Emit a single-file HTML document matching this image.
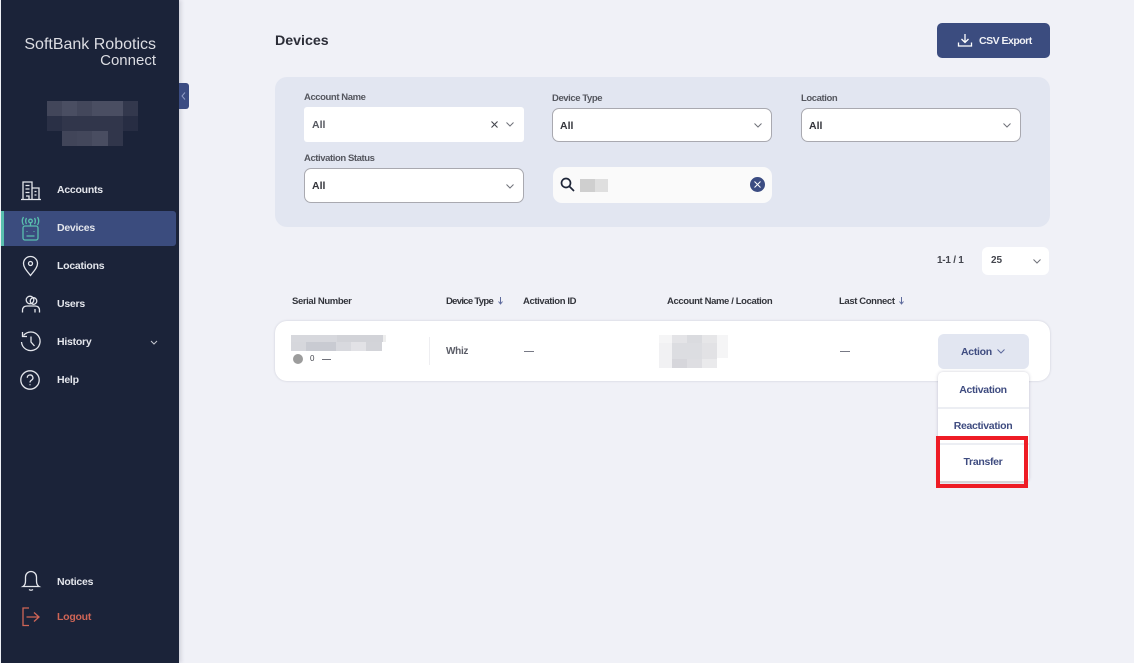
<!DOCTYPE html>
<html><head><meta charset="utf-8"><title>Devices</title>
<style>
*{box-sizing:border-box}
html{background:#f0f1f7}
html,body{margin:0;padding:0}
body{width:1134px;height:663px;overflow:hidden;background:#f0f1f7;position:relative;font-family:"Liberation Sans",sans-serif;filter:blur(.3px)}
.a{position:absolute}
.t{position:absolute;white-space:nowrap;font-weight:700;font-size:10px;line-height:12px}
.nav{color:#e4e6ec;font-size:10.5px;letter-spacing:-.25px}
.lab{color:#55575f;font-size:9.5px;letter-spacing:-.42px}
.sel{position:absolute;background:#fff;border:1px solid #a9a9b0;border-radius:7px;height:34px;width:220px}
.val{position:absolute;left:7px;top:10px;font-weight:700;font-size:10.5px;line-height:12px;color:#33343a}
svg{position:absolute;overflow:visible}
.px{position:absolute}
.h{color:#33353c;font-size:9.5px;letter-spacing:-.38px}
.menu{color:#3f4c80;font-size:10.5px;letter-spacing:-.32px;text-align:center;width:92px;left:937px}
</style></head><body>
<div class="a" style="left:0;top:0;width:179px;height:663px;background:#1b2339;box-shadow:2px 0 4px rgba(60,60,90,.18)"></div>
<div class="a" style="left:0;top:0;width:1px;height:663px;background:#eef0f6"></div>
<div class="t" style="left:10px;width:146px;text-align:right;top:36px;font-weight:400;font-size:16px;line-height:18px;color:#dcdde3">SoftBank Robotics</div>
<div class="t" style="left:60px;width:96px;text-align:right;top:52px;font-weight:400;font-size:15px;line-height:18px;color:#dcdde3">Connect</div>
<div class="a" style="left:179px;top:83px;width:10px;height:26px;background:#3b4c82;border-radius:0 3px 3px 0"></div>
<svg style="left:181px;top:92px" width="6" height="8"><path d="M4 .5 1 4l3 3.5" fill="none" stroke="#8f9bc4" stroke-width="1"/></svg>

<!-- blurred sidebar block -->
<div class="px" style="left:47px;top:101px;width:15px;height:15px;background:#42465a"></div>
<div class="px" style="left:62px;top:101px;width:15px;height:15px;background:#4a4e62"></div>
<div class="px" style="left:77px;top:101px;width:15px;height:15px;background:#43475b"></div>
<div class="px" style="left:92px;top:101px;width:31px;height:15px;background:#4a4e62"></div>
<div class="px" style="left:123px;top:101px;width:15px;height:15px;background:#33384d"></div>
<div class="px" style="left:47px;top:116px;width:15px;height:15px;background:#2a3046"></div>
<div class="px" style="left:62px;top:116px;width:61px;height:15px;background:#31364b"></div>
<div class="px" style="left:123px;top:116px;width:15px;height:15px;background:#272d43"></div>
<div class="px" style="left:62px;top:131px;width:15px;height:15px;background:#414559"></div>
<div class="px" style="left:77px;top:131px;width:15px;height:15px;background:#43475b"></div>
<div class="px" style="left:92px;top:131px;width:16px;height:15px;background:#494d61"></div>
<div class="px" style="left:108px;top:131px;width:15px;height:15px;background:#31364b"></div>

<!-- active nav -->
<div class="a" style="left:1px;top:211px;width:175px;height:35px;background:#3b4c7e;border-radius:0 3px 3px 0"></div>
<div class="a" style="left:1px;top:211px;width:3px;height:35px;background:#59bfae"></div>

<!-- Accounts icon -->
<svg style="left:20px;top:180px" width="22" height="22" fill="none" stroke="#e4e6ec" stroke-width="1.300">
<path d="M1 19.500H21M3 19.500V2H12V19.500M12 8H19V19.500M5.500 5.500H9.500M5.500 9H9.500M5.500 12.500H9.500M14.500 11.500H16.500M14.500 15H16.500M6 16H9V19.500"/></svg>
<div class="t nav" style="left:57px;top:184px">Accounts</div>
<!-- Devices icon -->
<svg style="left:20px;top:216px" width="22" height="26" fill="none" stroke="#59bfae" stroke-width="1.300">
<circle cx="10.500" cy="5" r="1.800"/><path d="M10.500 7V9.500M6.500 2Q4.800 5 6.500 8M14.500 2Q16.200 5 14.500 8M3.500 1Q1 5 3.500 9M17.500 1Q20 5 17.500 9"/>
<rect x="3" y="10" width="15" height="14" rx="2"/><path d="M6.500 20H14.500M7 15V15.800M14 15V15.800"/></svg>
<div class="t nav" style="left:57px;top:222px">Devices</div>
<!-- Locations icon -->
<svg style="left:22px;top:255px" width="18" height="22" fill="none" stroke="#e4e6ec" stroke-width="1.300">
<path d="M8.500 20.500C5 16 1.500 12.500 1.500 8.500A7 7 0 0 1 15.500 8.500C15.500 12.500 12 16 8.500 20.500Z"/><circle cx="8.500" cy="8.500" r="2"/></svg>
<div class="t nav" style="left:57px;top:260px">Locations</div>
<!-- Users icon -->
<svg style="left:21px;top:295px" width="20" height="20" fill="none" stroke="#e4e6ec" stroke-width="1.300">
<circle cx="9" cy="5" r="3.800"/><circle cx="12.500" cy="6" r="3.300"/><path d="M1.500 17.500V15.500Q1.500 11 6 11H14Q18.500 11 18.500 15.500V17.500M14 14V17.500"/></svg>
<div class="t nav" style="left:57px;top:298px">Users</div>
<!-- History icon -->
<svg style="left:20px;top:331px" width="22" height="22" fill="none" stroke="#e4e6ec" stroke-width="1.300">
<path d="M3.500 4.500A9.300 9.300 0 1 1 1.500 11"/><path d="M2.500 1V5.500H7M11 5.500V11L14.500 15"/></svg>
<div class="t nav" style="left:57px;top:336px">History</div>
<svg style="left:150px;top:340px" width="8" height="5"><path d="M1 1 4 4 7 1" fill="none" stroke="#c6c8d0" stroke-width="1"/></svg>
<!-- Help icon -->
<svg style="left:20px;top:370px" width="20" height="20" fill="none" stroke="#e4e6ec" stroke-width="1.300">
<circle cx="10" cy="10" r="9.200"/><path d="M7.300 7.800A2.800 2.800 0 1 1 11.500 10.200C10.500 10.800 10 11.300 10 12.500M10 14.300V15.300"/></svg>
<div class="t nav" style="left:57px;top:374px">Help</div>
<!-- Notices icon -->
<svg style="left:22px;top:570px" width="18" height="22" fill="none" stroke="#e4e6ec" stroke-width="1.300">
<path d="M1 16.500Q3.500 15 3.500 11V7A5.500 5.500 0 0 1 14.500 7V11Q14.500 15 17 16.500ZM7 19.500Q9 21 11 19.500"/></svg>
<div class="t nav" style="left:57px;top:575.500px">Notices</div>
<!-- Logout icon -->
<svg style="left:22px;top:607px" width="18" height="20" fill="none" stroke="#cf6556" stroke-width="1.300">
<path d="M7 1H1V18.500H7M4.500 10H17M12 5.500 17 10 12 14.500"/></svg>
<div class="t nav" style="left:57px;top:611px;color:#cf6556">Logout</div>

<!-- Header -->
<div class="t" style="left:275px;top:33px;font-size:14.200px;line-height:16px;color:#2c2e38">Devices</div>
<div class="a" style="left:937px;top:23px;width:113px;height:35px;background:#3b4c7f;border-radius:5px"></div>
<svg style="left:957px;top:33px" width="16" height="15" fill="none" stroke="#fff" stroke-width="1.300"><path d="M8 1V9.500M4.500 6 8 9.500 11.500 6M1.500 9.500V13H14.500V9.500"/></svg>
<div class="t" style="left:979px;top:34.500px;font-size:10.500px;letter-spacing:-.5px;color:#f0f1f6">CSV Export</div>

<!-- Filter panel -->
<div class="a" style="left:275px;top:77px;width:775px;height:150px;background:#e2e6f1;border-radius:12px"></div>
<div class="t lab" style="left:304px;top:91.500px">Account Name</div>
<div class="a" style="left:304px;top:107px;width:220px;height:35px;background:#fff;border-radius:3px"></div>
<div class="t" style="left:312px;top:118.500px;font-size:10.500px;color:#55575f">All</div>
<svg style="left:491px;top:121px" width="7" height="7"><path d="M.5.5 6.500 6.500M6.500.5.500 6.500" stroke="#44464e" stroke-width="1.100"/></svg>
<svg style="left:506px;top:122px" width="8" height="5"><path d="M.5.5 4 4 7.500.5" fill="none" stroke="#70727a" stroke-width="1"/></svg>

<div class="t lab" style="left:552px;top:92.500px">Device Type</div>
<div class="sel" style="left:552px;top:108px"><div class="val" style="top:10.500px">All</div><svg style="left:201px;top:14px" width="8" height="5"><path d="M.5.5 4 4 7.500.5" fill="none" stroke="#70727a" stroke-width="1"/></svg></div>
<div class="t lab" style="left:801px;top:92.500px">Location</div>
<div class="sel" style="left:801px;top:108px"><div class="val" style="top:10.500px">All</div><svg style="left:201px;top:14px" width="8" height="5"><path d="M.5.5 4 4 7.500.5" fill="none" stroke="#70727a" stroke-width="1"/></svg></div>
<div class="t lab" style="left:304px;top:152.500px">Activation Status</div>
<div class="sel" style="left:304px;top:168px;height:35px"><div class="val" style="top:10.500px">All</div><svg style="left:201px;top:15px" width="8" height="5"><path d="M.5.5 4 4 7.500.5" fill="none" stroke="#70727a" stroke-width="1"/></svg></div>

<div class="a" style="left:553px;top:167px;width:219px;height:36px;background:#fafafa;border-radius:9px"></div>
<svg style="left:560px;top:177px" width="15" height="15" fill="none" stroke="#1e2538" stroke-width="1.700"><circle cx="6" cy="6" r="4.500"/><path d="M9.500 9.500 14 14"/></svg>
<div class="px" style="left:580px;top:179px;width:15px;height:13px;background:#cfcfcf"></div>
<div class="px" style="left:595px;top:179px;width:13px;height:13px;background:#dfdfdf"></div>
<div class="a" style="left:750px;top:177px;width:15px;height:15px;border-radius:50%;background:#3b4c82"></div>
<svg style="left:754px;top:181px" width="7" height="7"><path d="M.5.5 6.500 6.500M6.500.5.500 6.500" stroke="#fff" stroke-width="1"/></svg>

<!-- Pagination -->
<div class="t" style="left:937px;top:254.500px;font-size:10px;letter-spacing:-.25px;color:#44464e">1-1 / 1</div>
<div class="a" style="left:982px;top:247px;width:67px;height:28px;background:#fff;border-radius:6px"></div>
<div class="t" style="left:991px;top:254.500px;font-size:10px;color:#44464e">25</div>
<svg style="left:1033px;top:259px" width="8" height="5"><path d="M.5.5 4 4 7.500.5" fill="none" stroke="#70727a" stroke-width="1"/></svg>

<!-- Table header -->
<div class="t h" style="left:292px;top:295.500px">Serial Number</div>
<div class="t h" style="left:446px;top:295.500px;letter-spacing:-.7px">Device Type</div>
<svg style="left:498px;top:297px" width="5" height="8" fill="none" stroke="#5d6a9c" stroke-width="1"><path d="M2.500 0V7M.5 4.500 2.500 7 4.500 4.500"/></svg>
<div class="t h" style="left:523px;top:295.500px">Activation ID</div>
<div class="t h" style="left:667px;top:295.500px">Account Name / Location</div>
<div class="t h" style="left:839px;top:295.500px">Last Connect</div>
<svg style="left:899px;top:297px" width="5" height="8" fill="none" stroke="#5d6a9c" stroke-width="1"><path d="M2.500 0V7M.5 4.500 2.500 7 4.500 4.500"/></svg>

<!-- Row -->
<div class="a" style="left:275px;top:321px;width:775px;height:60px;background:#fff;border-radius:12px;box-shadow:0 0 2px rgba(90,90,120,.25)"></div>
<div class="px" style="left:291px;top:335px;width:46px;height:7px;background:#d7d8dd"></div>
<div class="px" style="left:337px;top:335px;width:46px;height:7px;background:#d2d3d8"></div>
<div class="px" style="left:383px;top:335px;width:3px;height:7px;background:#eeeeee"></div>
<div class="px" style="left:291px;top:342px;width:15px;height:9px;background:#d6d7dc"></div>
<div class="px" style="left:306px;top:342px;width:30px;height:9px;background:#c9cbd2"></div>
<div class="px" style="left:336px;top:342px;width:15px;height:9px;background:#d8d9de"></div>
<div class="px" style="left:351px;top:342px;width:15px;height:9px;background:#e2e2e6"></div>
<div class="px" style="left:366px;top:342px;width:16px;height:9px;background:#d3d4d9"></div>
<div class="a" style="left:293px;top:354px;width:10px;height:10px;border-radius:50%;background:#9c9c9c"></div>
<div class="t" style="left:310px;top:353px;font-size:8px;font-weight:400;color:#44464e">0</div>
<div class="a" style="left:322px;top:359px;width:9px;height:1px;background:#6f717a"></div>
<div class="a" style="left:429px;top:337px;width:1px;height:28px;background:#eeeef1"></div>
<div class="t" style="left:446px;top:346px;font-size:10px;letter-spacing:-.3px;color:#5c5e68">Whiz</div>
<div class="a" style="left:524px;top:351px;width:10px;height:1px;background:#777985"></div>
<div class="px" style="left:659px;top:335px;width:13px;height:16px;background:#f5f5f6"></div>
<div class="px" style="left:672px;top:335px;width:15px;height:16px;background:#e4e4e7"></div>
<div class="px" style="left:687px;top:335px;width:15px;height:16px;background:#dadbdf"></div>
<div class="px" style="left:702px;top:335px;width:15px;height:16px;background:#e6e6e8"></div>
<div class="px" style="left:717px;top:335px;width:11px;height:23px;background:#f5f5f6"></div>
<div class="px" style="left:659px;top:343px;width:13px;height:25px;background:#f1f1f3"></div>
<div class="px" style="left:672px;top:343px;width:30px;height:16px;background:#dcdde1"></div>
<div class="px" style="left:702px;top:343px;width:15px;height:16px;background:#e2e2e5"></div>
<div class="px" style="left:672px;top:359px;width:15px;height:9px;background:#d6d6db"></div>
<div class="px" style="left:687px;top:359px;width:15px;height:9px;background:#dedee2"></div>
<div class="px" style="left:702px;top:359px;width:15px;height:9px;background:#eaeaec"></div>
<div class="a" style="left:840px;top:351px;width:10px;height:1px;background:#777985"></div>

<div class="a" style="left:938px;top:334px;width:91px;height:35px;background:#e2e6f1;border-radius:6px"></div>
<div class="t" style="left:961px;top:345.500px;font-size:10.500px;letter-spacing:-.3px;color:#3f4c80">Action</div>
<svg style="left:997px;top:349px" width="8" height="5"><path d="M.5.5 4 4 7.500.5" fill="none" stroke="#5d6a9c" stroke-width="1"/></svg>

<!-- Dropdown -->
<div class="a" style="left:938px;top:372px;width:91px;height:110px;background:#fff;border-radius:5px;box-shadow:0 0 3px rgba(90,90,120,.3)"></div>
<div class="a" style="left:938px;top:407px;width:91px;height:2px;background:#eceef3"></div>
<div class="a" style="left:938px;top:443px;width:91px;height:2px;background:#eceef3"></div>
<div class="t menu" style="top:384px">Activation</div>
<div class="t menu" style="top:420px">Reactivation</div>
<div class="t menu" style="top:456px">Transfer</div>
<div class="a" style="left:936px;top:436px;width:92px;height:52px;border:4px solid #ee1c25"></div>
<div class="a" style="left:940px;top:481px;width:84px;height:2px;background:#d6d6d8"></div>
</body></html>
